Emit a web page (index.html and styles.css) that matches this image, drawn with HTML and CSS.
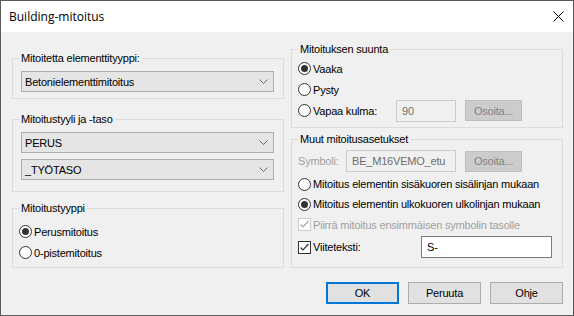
FILE: index.html
```html
<!DOCTYPE html>
<html lang="fi">
  <head>
    <meta charset="UTF-8" />
    <title>Building-mitoitus</title>
    <link rel="stylesheet" href="styles.css">
  </head>
  <body>
    <div class="window">
      <div class="titlebar">
        <span class="title">Building-mitoitus</span>
        <svg class="close" width="11" height="11" viewBox="0 0 11 11">
          <path d="M0.5 0.5 L10.5 10.5 M10.5 0.5 L0.5 10.5" />
        </svg>
      </div>

      <div class="content">
        <div class="columns">
          <div class="col col-left">
            <fieldset class="group g-type">
              <legend>Mitoitetta elementtityyppi:</legend>
              <div class="group-body">
                <div class="select">
                  <span>Betonielementtimitoitus</span>
                  <svg class="chev" width="9" height="5" viewBox="0 0 9 5"><path d="M0.5 0.5 L4.5 4.5 L8.5 0.5" /></svg>
                </div>
              </div>
            </fieldset>

            <fieldset class="group g-style">
              <legend>Mitoitustyyli ja -taso</legend>
              <div class="group-body">
                <div class="select">
                  <span>PERUS</span>
                  <svg class="chev" width="9" height="5" viewBox="0 0 9 5"><path d="M0.5 0.5 L4.5 4.5 L8.5 0.5" /></svg>
                </div>
                <div class="select">
                  <span>_TYÖTASO</span>
                  <svg class="chev" width="9" height="5" viewBox="0 0 9 5"><path d="M0.5 0.5 L4.5 4.5 L8.5 0.5" /></svg>
                </div>
              </div>
            </fieldset>

            <fieldset class="group g-kind">
              <legend>Mitoitustyyppi</legend>
              <div class="group-body">
                <label class="row"><span class="radio checked"></span>Perusmitoitus</label>
                <label class="row"><span class="radio"></span>0-pistemitoitus</label>
              </div>
            </fieldset>
          </div>

          <div class="col col-right">
            <fieldset class="group g-dir">
              <legend>Mitoituksen suunta</legend>
              <div class="group-body">
                <label class="row"><span class="radio checked"></span>Vaaka</label>
                <label class="row"><span class="radio"></span>Pysty</label>
                <div class="row">
                  <label class="angle-label"><span class="radio"></span>Vapaa kulma:</label>
                  <div class="input disabled angle-input">90</div>
                  <div class="btn disabled">Osoita...</div>
                </div>
              </div>
            </fieldset>

            <fieldset class="group g-other">
              <legend>Muut mitoitusasetukset</legend>
              <div class="group-body">
                <div class="row row-symbol">
                  <span class="symbol-label">Symboli:</span>
                  <div class="input disabled symbol-input">BE_M16VEMO_etu</div>
                  <div class="btn disabled">Osoita...</div>
                </div>
                <label class="row row-radio first"><span class="radio"></span>Mitoitus elementin sisäkuoren sisälinjan mukaan</label>
                <label class="row row-radio"><span class="radio checked"></span>Mitoitus elementin ulkokuoren ulkolinjan mukaan</label>
                <label class="row row-check muted">
                  <span class="check disabled"><svg width="11" height="11" viewBox="0 0 11 11"><path d="M1.5 5.5 L4 8 L9.5 2" /></svg></span>
                  Piirrä mitoitus ensimmäisen symbolin tasolle
                </label>
                <div class="row row-viite">
                  <label class="viite-label">
                    <span class="check"><svg width="11" height="11" viewBox="0 0 11 11"><path d="M1.5 5.5 L4 8 L9.5 2" /></svg></span>
                    Viiteteksti:
                  </label>
                  <div class="input viite-input">S-</div>
                </div>
              </div>
            </fieldset>
          </div>
        </div>

        <div class="buttons">
          <div class="btn default">OK</div>
          <div class="btn">Peruuta</div>
          <div class="btn">Ohje</div>
        </div>
      </div>
    </div>
  </body>
</html>
```

FILE: styles.css
```css
body {
  margin: 0;
  font-family: "Liberation Sans", Arial, sans-serif;
  font-size: 11px;
  letter-spacing: -0.2px;
  color: #000;
  background: #f0f0f0;
}
.window {
  width: 574px;
  height: 316px;
  box-sizing: border-box;
  border: 1px solid #5a5a5a;
  background-color: #f0f0f0;
  display: flex;
  flex-direction: column;
}
.titlebar {
  height: 31px;
  background-color: white;
  display: flex;
  align-items: center;
  justify-content: space-between;
  padding: 0 9px 0 8px;
}
.title {
  font-family: "Open Sans", "Noto Sans", sans-serif;
  font-size: 12px;
  letter-spacing: 0;
}
.close path {
  stroke: #000;
  stroke-width: 1;
  fill: none;
}
.content {
  flex: 1;
  padding: 0 10px 0 11px;
  display: flex;
  flex-direction: column;
}
.columns {
  display: grid;
  grid-template-columns: 272px 272px;
  column-gap: 7px;
}
.col {
  display: flex;
  flex-direction: column;
}
.col-left {
  padding-top: 18px;
}
.col-right {
  padding-top: 9px;
}
.group {
  margin: 0;
  padding: 0;
  border: 1px solid #dcdcdc;
  min-width: 0;
}
.group legend {
  margin-left: 6px;
  padding: 0 2px;
  height: 16px;
  line-height: 16px;
}
.group-body {
  display: flex;
  flex-direction: column;
}
.g-type .group-body {
  padding: 5px 9px 6px 8px;
}
.g-style {
  margin-top: 12px;
}
.g-style .group-body {
  padding: 5px 9px 11px 8px;
  gap: 6px;
}
.g-kind {
  margin-top: 8px;
}
.g-kind .group-body {
  padding: 5px 9px 4px 6px;
}
.g-dir .group-body {
  padding: 1px 9px 6px 6px;
}
.g-other {
  margin-top: 3px;
}
.g-other .group-body {
  padding: 3px 9px 9px 6px;
}

.row {
  display: flex;
  align-items: center;
  height: 21px;
  white-space: nowrap;
}
.row-symbol {
  height: 22px;
}
.row-radio {
  height: 20px;
}
.row-radio.first {
  margin-top: 2px;
}
.row-viite {
  height: 22px;
  margin-top: 1px;
}

.select {
  height: 21px;
  box-sizing: border-box;
  background-color: #e5e5e5;
  border: 1px solid #adadad;
  display: flex;
  align-items: center;
  justify-content: space-between;
  padding: 0 5px 0 3px;
}
.chev path {
  stroke: #666;
  stroke-width: 1;
  fill: none;
}

.radio {
  width: 13px;
  height: 13px;
  box-sizing: border-box;
  border: 1px solid #333;
  border-radius: 50%;
  background-color: white;
  margin-right: 2px;
  position: relative;
  flex: none;
}
.radio.checked::after {
  content: "";
  position: absolute;
  left: 2px;
  top: 2px;
  width: 7px;
  height: 7px;
  border-radius: 50%;
  background-color: #333;
}

.check {
  width: 13px;
  height: 13px;
  box-sizing: border-box;
  border: 1px solid #333;
  background-color: white;
  margin-right: 2px;
  flex: none;
  display: flex;
}
.check path {
  stroke: #333;
  stroke-width: 1.2;
  fill: none;
}
.check.disabled {
  border-color: #cccccc;
}
.check.disabled path {
  stroke: #a8a8a8;
}
.muted {
  color: #a0a0a0;
}

.input {
  height: 22px;
  box-sizing: border-box;
  border: 1px solid #7a7a7a;
  background-color: white;
  display: flex;
  align-items: center;
  padding-left: 5px;
}
.input.disabled {
  border-color: #cccccc;
  background-color: #f0f0f0;
  color: #6d6d6d;
}
.angle-label {
  display: flex;
  align-items: center;
  width: 98px;
}
.angle-input {
  width: 60px;
}
.symbol-label {
  width: 48px;
  color: #a0a0a0;
}
.symbol-input {
  width: 110px;
}
.viite-label {
  display: flex;
  align-items: center;
  width: 123px;
}
.viite-input {
  width: 131px;
}

.btn {
  height: 22px;
  width: 73px;
  box-sizing: border-box;
  background-color: #e1e1e1;
  border: 1px solid #adadad;
  display: flex;
  align-items: center;
  justify-content: center;
}
.btn.disabled {
  width: 57px;
  height: 21px;
  margin-left: 9px;
  background-color: #cccccc;
  border-color: #bfbfbf;
  color: #838383;
}
.btn.default {
  border: 2px solid #0078d7;
}
.buttons {
  display: flex;
  justify-content: flex-end;
  gap: 9px;
  margin-top: 14px;
}
```
